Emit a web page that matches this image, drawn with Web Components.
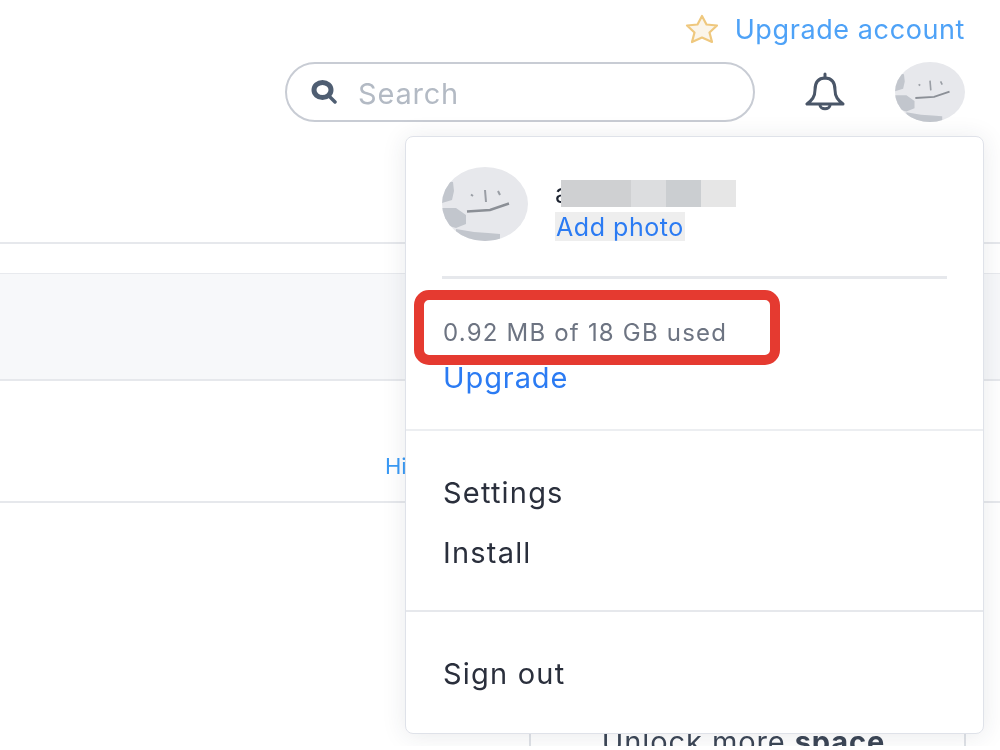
<!DOCTYPE html>
<html>
<head>
<meta charset="utf-8">
<style>
    html, body { margin: 0; background: #fff; }
    body { font-family: Inter, Roboto, "Liberation Sans", sans-serif; }
</style>
</head>
<body>
<app-shell></app-shell>
<script>
const faceSvg = `
    <svg viewBox="0 0 86 74" preserveAspectRatio="none" width="100%" height="100%">
        <defs><clipPath id="c"><ellipse cx="43" cy="37" rx="43" ry="37"/></clipPath></defs>
        <g clip-path="url(#c)">
            <rect width="86" height="74" fill="#e7e8ec"/>
            <path d="M0 14 L11 15 L12 24 L10 33 L0 36Z M0 41 L14 41 L24 48 L24 57 L14 61 L0 57Z M14 62 L32 65 L46 66 L58 67 L58 74 L14 74Z" fill="#c2c6cd"/>
        </g>
        <path d="M29 27.5 L31 29 M43 23 L44 35 M56 24 L58 28" stroke="#9a9ea5" stroke-width="2" fill="none"/>
        <path d="M25 44.5 L48 43 L67 36.5" stroke="#8b8f96" stroke-width="2.4" fill="none"/>
    </svg>`;

class UserAvatar extends HTMLElement {
    constructor() {
        super();
        this.attachShadow({mode: 'open'}).innerHTML = `
            <style>
                :host { display: block; flex: none; width: var(--w, 70px); height: var(--h, 60px); }
            </style>
            ${faceSvg}`;
    }
}

class SearchBox extends HTMLElement {
    constructor() {
        super();
        this.attachShadow({mode: 'open'}).innerHTML = `
            <style>
                :host {
                    display: flex;
                    align-items: center;
                    box-sizing: border-box;
                    width: 470px;
                    height: 60px;
                    padding-left: 24px;
                    gap: 21px;
                    border: 2px solid #c8ccd4;
                    border-radius: 30px;
                    color: #b3bac4;
                    font-size: 29px;
                    letter-spacing: .8px;
                }
                svg { flex: none; }
                span { position: relative; top: 1px; }
            </style>
            <svg width="26" height="24" viewBox="0 0 26 24">
                <ellipse cx="11.5" cy="10" rx="8.5" ry="7.5" fill="none" stroke="#4f5e72" stroke-width="5"/>
                <path d="M18 16 L24 22" stroke="#4f5e72" stroke-width="3.5" stroke-linecap="round"/>
            </svg>
            <span>Search</span>`;
    }
}

class TopBar extends HTMLElement {
    constructor() {
        super();
        this.attachShadow({mode: 'open'}).innerHTML = `
            <style>
                :host { display: block; box-sizing: border-box; height: 242px; padding: 13px 35px 0 0; }
                .upgrade {
                    display: flex;
                    justify-content: flex-end;
                    align-items: center;
                    gap: 16px;
                    height: 32px;
                    color: #4ea2f7;
                    font-size: 27px;
                    letter-spacing: .6px;
                }
                .tools {
                    display: flex;
                    justify-content: flex-end;
                    align-items: center;
                    height: 60px;
                    margin-top: 17px;
                }
                .bell { margin: 0 50px 0 50px; }
            </style>
            <div class="upgrade">
                <svg width="34" height="30" viewBox="0 0 34 30">
                    <path d="M17 2 L21.5 10.5 L32 11.5 L24.5 18.5 L27 28 L17 23.5 L7 28 L9.5 18.5 L2 11.5 L12.5 10.5Z" fill="#fbf5ea" stroke="#efc87e" stroke-width="2.2" stroke-linejoin="round"/>
                </svg>
                <span>Upgrade account</span>
            </div>
            <div class="tools">
                <search-box></search-box>
                <svg class="bell" width="40" height="40" viewBox="0 0 40 40" fill="none" stroke="#4a5668" stroke-width="3" stroke-linejoin="round" stroke-linecap="round">
                    <path d="M20 6 C12 6 10 12 10 18 C10 25 7 28 2 32 L38 32 C33 28 30 25 30 18 C30 12 28 6 20 6Z"/>
                    <path d="M20 2 L20 6"/>
                    <path d="M15 33 C15 38 25 38 25 33"/>
                </svg>
                <user-avatar></user-avatar>
            </div>`;
    }
}

class BgTable extends HTMLElement {
    constructor() {
        super();
        this.attachShadow({mode: 'open'}).innerHTML = `
            <style>
                :host { display: block; }
                .head { height: 29px; border-top: 2px solid #e6e8ec; border-bottom: 1px solid #e8eaee; }
                .shade { height: 105px; background: #f7f8fa; border-bottom: 2px solid #e6e8ec; }
                .row {
                    box-sizing: border-box;
                    height: 122px;
                    padding: 71px 0 0 385px;
                    border-bottom: 2px solid #e6e8ec;
                    font-size: 22px;
                    line-height: 28px;
                    color: #3a9af5;
                }
            </style>
            <div class="head"></div>
            <div class="shade"></div>
            <div class="row">Hide</div>`;
    }
}

class SidePanel extends HTMLElement {
    constructor() {
        super();
        this.attachShadow({mode: 'open'}).innerHTML = `
            <style>
                :host {
                    display: block;
                    box-sizing: border-box;
                    width: 437px;
                    height: 243px;
                    margin-left: 529px;
                    padding: 222px 8px 0 0;
                    border-left: 2px solid #dfe2e7;
                    border-right: 2px solid #dfe2e7;
                    text-align: center;
                    color: #3c4656;
                    font-size: 29px;
                    line-height: 34px;
                    letter-spacing: .9px;
                }
                b { font-weight: 700; }
            </style>
            Unlock more <b>space</b>`;
    }
}

class AccountMenu extends HTMLElement {
    constructor() {
        super();
        this.attachShadow({mode: 'open'}).innerHTML = `
            <style>
                :host {
                    position: absolute;
                    left: 405px;
                    top: 136px;
                    box-sizing: border-box;
                    width: 579px;
                    height: 598px;
                    background: #fff;
                    border: 1px solid #dfe2e9;
                    border-radius: 8px;
                    box-shadow: 0 2px 24px rgba(40, 50, 70, .1);
                    color: #2a2f3c;
                    font-size: 29px;
                    letter-spacing: 1.2px;
                }
                .profile { display: flex; gap: 27px; height: 109px; margin: 0 36px; padding-top: 30px; box-sizing: border-box; }
                .who { --w: 86px; }
                .name { position: relative; width: 181px; height: 27px; margin-top: 13px; overflow: hidden; font-size: 26px; line-height: 27px; color: #1c2330; }
                .blocks { position: absolute; left: 6px; top: 0; display: flex; height: 27px; }
                .blocks i { display: block; }
                .photo { display: inline-block; margin-top: 5px; padding: 0 1px; height: 29px; line-height: 30px; background: #eee; color: #2b7bf3; font-size: 25px; letter-spacing: .55px; }
                .rule { height: 3px; margin: 30px 36px 0 36px; background: #e6e8ec; }
                .storage { height: 152px; box-sizing: border-box; padding: 40px 37px 0; border-bottom: 2px solid #eceef1; }
                .used { font-size: 24px; line-height: 28px; color: #6d7482; letter-spacing: 1.2px; }
                .link { margin-top: 14px; font-size: 29px; line-height: 34px; color: #2b7bf3; letter-spacing: .9px; }
                .group { display: flex; flex-direction: column; box-sizing: border-box; padding: 0 37px; border-bottom: 2px solid #e6e8ec; }
                .items { height: 181px; padding-top: 45px; gap: 26px; }
                .out { height: 122px; padding-top: 45px; border-bottom: 0; }
                .group span { line-height: 34px; }
                .mark {
                    position: absolute;
                    left: 8px;
                    top: 153px;
                    box-sizing: border-box;
                    width: 366px;
                    height: 75px;
                    border: 10px solid #e53a30;
                    border-radius: 15px;
                }
            </style>
            <div class="profile">
                <user-avatar class="who" style="--h:74px"></user-avatar>
                <div>
                    <div class="name">a<div class="blocks">
                        <i style="width:70px;background:#cfd0d2"></i>
                        <i style="width:35px;background:#dcdddf"></i>
                        <i style="width:35px;background:#cbced1"></i>
                        <i style="width:35px;background:#e6e6e6"></i>
                    </div></div>
                    <span class="photo">Add photo</span>
                </div>
            </div>
            <div class="rule"></div>
            <div class="storage">
                <div class="used">0.92 MB of 18 GB used</div>
                <div class="link">Upgrade</div>
            </div>
            <div class="group items"><span>Settings</span><span>Install</span></div>
            <div class="group out"><span>Sign out</span></div>
            <div class="mark"></div>`;
    }
}

class AppShell extends HTMLElement {
    constructor() {
        super();
        this.attachShadow({mode: 'open'}).innerHTML = `
            <style>
                :host { display: block; position: relative; height: 746px; overflow: hidden; filter: blur(.45px); }
            </style>
            <top-bar></top-bar>
            <bg-table></bg-table>
            <side-panel></side-panel>
            <account-menu></account-menu>`;
    }
}

customElements.define('user-avatar', UserAvatar);
customElements.define('search-box', SearchBox);
customElements.define('top-bar', TopBar);
customElements.define('bg-table', BgTable);
customElements.define('side-panel', SidePanel);
customElements.define('account-menu', AccountMenu);
customElements.define('app-shell', AppShell);
</script>
</body>
</html>
